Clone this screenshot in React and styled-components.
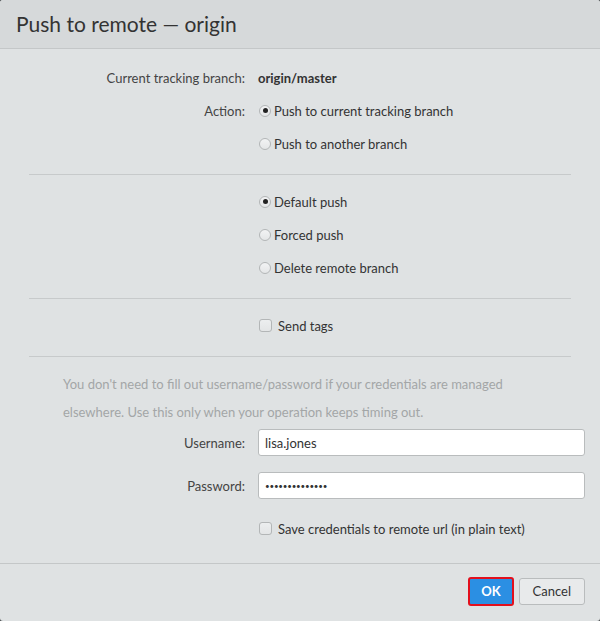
import React from "react";
import styled, { createGlobalStyle } from "styled-components";

const Global = createGlobalStyle`
  html, body { margin: 0; padding: 0; background: #4a4d4f; }
  body { font-family: "Lato", "Liberation Sans", sans-serif; }
  * { box-sizing: border-box; }
`;

const Dialog = styled.div`
  width: 600px;
  height: 621px;
  background: #dfe2e3;
  border-radius: 3px;
  overflow: hidden;
  display: flex;
  flex-direction: column;
  color: #333;
  font-size: 13px;
`;

const Header = styled.div`
  height: 49px;
  background: #d6d9da;
  border-bottom: 1px solid #c4c7c8;
  display: flex;
  align-items: center;
  padding: 0 16px;
  flex-shrink: 0;
`;

const Title = styled.h1`
  margin: 0;
  font-size: 21px;
  font-weight: 400;
  color: #333;
  padding-bottom: 2px;
`;

const Body = styled.div`
  flex: 1;
  padding: 12px 15px 0;
`;

const Grid = styled.div`
  display: grid;
  grid-template-columns: 230px 1fr;
  column-gap: 13px;
`;

const Label = styled.div`
  text-align: right;
  color: #444;
  height: ${(p) => p.$h || 33}px;
  display: flex;
  align-items: center;
  justify-content: flex-end;
`;

const Cell = styled.div`
  height: ${(p) => p.$h || 33}px;
  display: flex;
  align-items: center;
  font-weight: ${(p) => (p.$bold ? 700 : 400)};
`;

const Sep = styled.hr`
  border: none;
  border-top: 1px solid #c7cacb;
  margin: 14px 14px 10px;
  height: 0;
`;

const RadioDot = styled.span`
  width: 12px;
  height: 12px;
  border-radius: 50%;
  border: 1px solid #b3b6b7;
  background: linear-gradient(#f2f3f4, #e4e6e7);
  margin: 0 3px 0 1px;
  display: inline-flex;
  align-items: center;
  justify-content: center;
  flex-shrink: 0;
  &::after {
    content: "";
    width: 5px;
    height: 5px;
    border-radius: 50%;
    background: #222;
    display: ${(p) => (p.$checked ? "block" : "none")};
  }
`;

const Box = styled.span`
  width: 13px;
  height: 13px;
  border: 1px solid #b3b6b7;
  border-radius: 3px;
  background: linear-gradient(#eceeef, #e3e5e6);
  margin: 0 6px 0 1px;
  flex-shrink: 0;
`;

const Help = styled.div`
  color: #a3a6a7;
  line-height: 28px;
  padding: 3px 40px 0 48px;
`;

const Input = styled.div`
  flex: 1;
  height: 27px;
  background: #fff;
  border: 1px solid #b9bcbd;
  border-radius: 3px;
  padding: 0 6px;
  display: flex;
  align-items: center;
  color: #333;
`;

const Dots = styled.span`
  font-size: 8px;
  letter-spacing: -0.2px;
`;

const Footer = styled.div`
  height: 58px;
  border-top: 1px solid #c4c7c8;
  display: flex;
  justify-content: flex-end;
  align-items: center;
  gap: 5px;
  padding: 0 15px 3px;
  flex-shrink: 0;
`;

const Button = styled.button`
  font-family: inherit;
  font-size: 13px;
  height: ${(p) => (p.$primary ? 29 : 27)}px;
  padding: 0 ${(p) => (p.$primary ? 11 : 13)}px;
  border-radius: 3px;
  cursor: pointer;
  color: ${(p) => (p.$primary ? "#fff" : "#333")};
  font-weight: ${(p) => (p.$primary ? 700 : 400)};
  background: ${(p) => (p.$primary ? "#2b8fe3" : "#e8eaeb")};
  border: ${(p) => (p.$primary ? "2px solid #e3101d" : "1px solid #b9bcbd")};
`;

const Radio = ({ checked, children }) => (
  <>
    <RadioDot $checked={checked} />
    {children}
  </>
);

const Check = ({ children }) => (
  <>
    <Box />
    {children}
  </>
);

export default function App() {
  return (
    <>
      <Global />
      <Dialog>
        <Header>
          <Title>Push to remote — origin</Title>
        </Header>
        <Body>
          <Grid>
            <Label>Current tracking branch:</Label>
            <Cell $bold>origin/master</Cell>
            <Label>Action:</Label>
            <Cell>
              <Radio checked>Push to current tracking branch</Radio>
            </Cell>
            <Label />
            <Cell>
              <Radio>Push to another branch</Radio>
            </Cell>
          </Grid>
          <Sep />
          <Grid>
            <Label />
            <Cell>
              <Radio checked>Default push</Radio>
            </Cell>
            <Label />
            <Cell>
              <Radio>Forced push</Radio>
            </Cell>
            <Label />
            <Cell>
              <Radio>Delete remote branch</Radio>
            </Cell>
          </Grid>
          <Sep />
          <Grid>
            <Label />
            <Cell>
              <Check>Send tags</Check>
            </Cell>
          </Grid>
          <Sep />
          <Help>
            You don't need to fill out username/password if your credentials are managed
            elsewhere. Use this only when your operation keeps timing out.
          </Help>
          <Grid>
            <Label $h={33}>Username:</Label>
            <Cell $h={33}>
              <Input>lisa.jones</Input>
            </Cell>
            <Label $h={53}>Password:</Label>
            <Cell $h={53}>
              <Input>
                <Dots>••••••••••••••</Dots>
              </Input>
            </Cell>
            <Label $h={33} />
            <Cell $h={33}>
              <Check>Save credentials to remote url (in plain text)</Check>
            </Cell>
          </Grid>
        </Body>
        <Footer>
          <Button $primary>OK</Button>
          <Button>Cancel</Button>
        </Footer>
      </Dialog>
    </>
  );
}
